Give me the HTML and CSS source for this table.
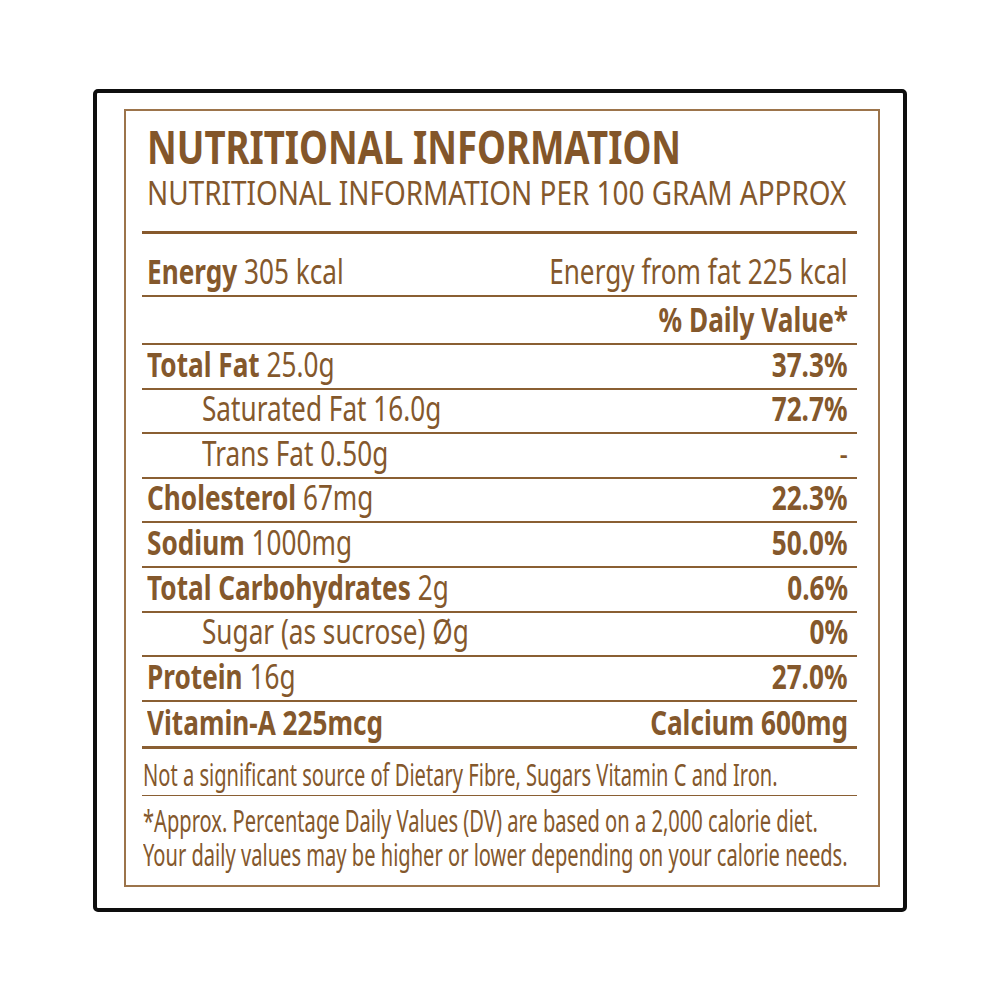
FILE: index.html
```html
<!DOCTYPE html>
<html lang="en">
<head>
<meta charset="utf-8">
<title>Nutritional Information</title>
<link rel="stylesheet" href="styles.css">
</head>
<body>
<div class="frame">
  <div class="panel">
    <h1 class="title">NUTRITIONAL INFORMATION</h1>
    <p class="subtitle">NUTRITIONAL INFORMATION PER 100 GRAM APPROX</p>
    <div class="table">
      <div class="row row-energy">
        <span><b>Energy</b> 305 kcal</span>
        <span>Energy from fat 225 kcal</span>
      </div>
      <div class="row row-dv">
        <span></span>
        <span><b>% Daily Value*</b></span>
      </div>
      <div class="row">
        <span><b>Total Fat</b> 25.0g</span>
        <span><b>37.3%</b></span>
      </div>
      <div class="row">
        <span class="sub">Saturated Fat 16.0g</span>
        <span><b>72.7%</b></span>
      </div>
      <div class="row">
        <span class="sub">Trans Fat 0.50g</span>
        <span>-</span>
      </div>
      <div class="row">
        <span><b>Cholesterol</b> 67mg</span>
        <span><b>22.3%</b></span>
      </div>
      <div class="row">
        <span><b>Sodium</b> 1000mg</span>
        <span><b>50.0%</b></span>
      </div>
      <div class="row">
        <span><b>Total Carbohydrates</b> 2g</span>
        <span><b>0.6%</b></span>
      </div>
      <div class="row">
        <span class="sub">Sugar (as sucrose) Øg</span>
        <span><b>0%</b></span>
      </div>
      <div class="row">
        <span><b>Protein</b> 16g</span>
        <span><b>27.0%</b></span>
      </div>
      <div class="row row-last">
        <span><b>Vitamin-A 225mcg</b></span>
        <span><b>Calcium 600mg</b></span>
      </div>
      <div class="note"><span class="cond-note">Not a significant source of Dietary Fibre, Sugars Vitamin C and Iron.</span></div>
      <div class="note2">
        <p><span class="cond-note2">*Approx. Percentage Daily Values (DV) are based on a 2,000 calorie diet.</span></p>
        <p><span class="cond-note2">Your daily values may be higher or lower depending on your calorie needs.</span></p>
      </div>
    </div>
  </div>
</div>
</body>
</html>
```
FILE: styles.css
```css
html, body {
  margin: 0;
  padding: 0;
  background: #ffffff;
}

body {
  font-family: "Noto Sans", "DejaVu Sans", sans-serif;
  color: #84582c;
}

.frame {
  box-sizing: border-box;
  margin: 89px 0 0 93px;
  width: 814px;
  height: 823px;
  border: 4px solid #0e0e0e;
  border-radius: 5px;
  padding: 16px 23px 21px 27px;
}

.panel {
  box-sizing: border-box;
  height: 100%;
  border: 2px solid #9c744b;
  padding: 0 21px 0 16px;
  display: flex;
  flex-direction: column;
  overflow: hidden;
}

.title {
  margin: 12px 0 0 5px;
  font-size: 46px;
  line-height: 46px;
  font-weight: 700;
  color: #83562a;
  white-space: nowrap;
  flex-shrink: 0;
  transform: scaleX(0.795);
  transform-origin: left center;
}

.subtitle {
  margin: 7px 0 0 5px;
  font-size: 33px;
  line-height: 33px;
  font-weight: 400;
  white-space: nowrap;
  flex-shrink: 0;
  transform: scaleX(0.846);
  transform-origin: left center;
}

.table {
  margin-top: 22px;
  border-top: 3px solid #87592c;
  flex: 1;
  display: flex;
  flex-direction: column;
}

.row {
  box-sizing: border-box;
  flex-shrink: 0;
  height: 44.6px;
  border-bottom: 2px solid #8a5f33;
  display: flex;
  justify-content: space-between;
  align-items: flex-end;
  padding: 0 9px 7px 5px;
  font-size: 34px;
  line-height: 34px;
  white-space: nowrap;
}

.row > span {
  display: inline-block;
  transform: scaleX(0.77);
}

.row > span:first-child {
  transform-origin: left bottom;
}

.row > span:last-child {
  transform-origin: right bottom;
}

.row b {
  font-weight: 700;
}

.row-energy {
  height: 63px;
}

.row-dv {
  height: 48px;
}

.row-last {
  height: 47px;
  border-bottom-width: 3px;
}

.sub {
  margin-left: 55px;
}

.note {
  box-sizing: border-box;
  flex-shrink: 0;
  height: 47px;
  border-bottom: 1.5px solid #8a5f33;
  display: flex;
  align-items: flex-end;
  padding: 0 0 5px 1px;
  font-size: 30px;
  line-height: 30px;
  white-space: nowrap;
}

.note2 {
  padding: 8px 0 0 1px;
  font-size: 30px;
  line-height: 34px;
  white-space: nowrap;
}

.note2 p {
  margin: 0;
}

.cond-note,
.cond-note2 {
  display: inline-block;
  transform-origin: left center;
}

.cond-note {
  transform: scaleX(0.67);
}

.cond-note2 {
  transform: scaleX(0.67);
}
```
